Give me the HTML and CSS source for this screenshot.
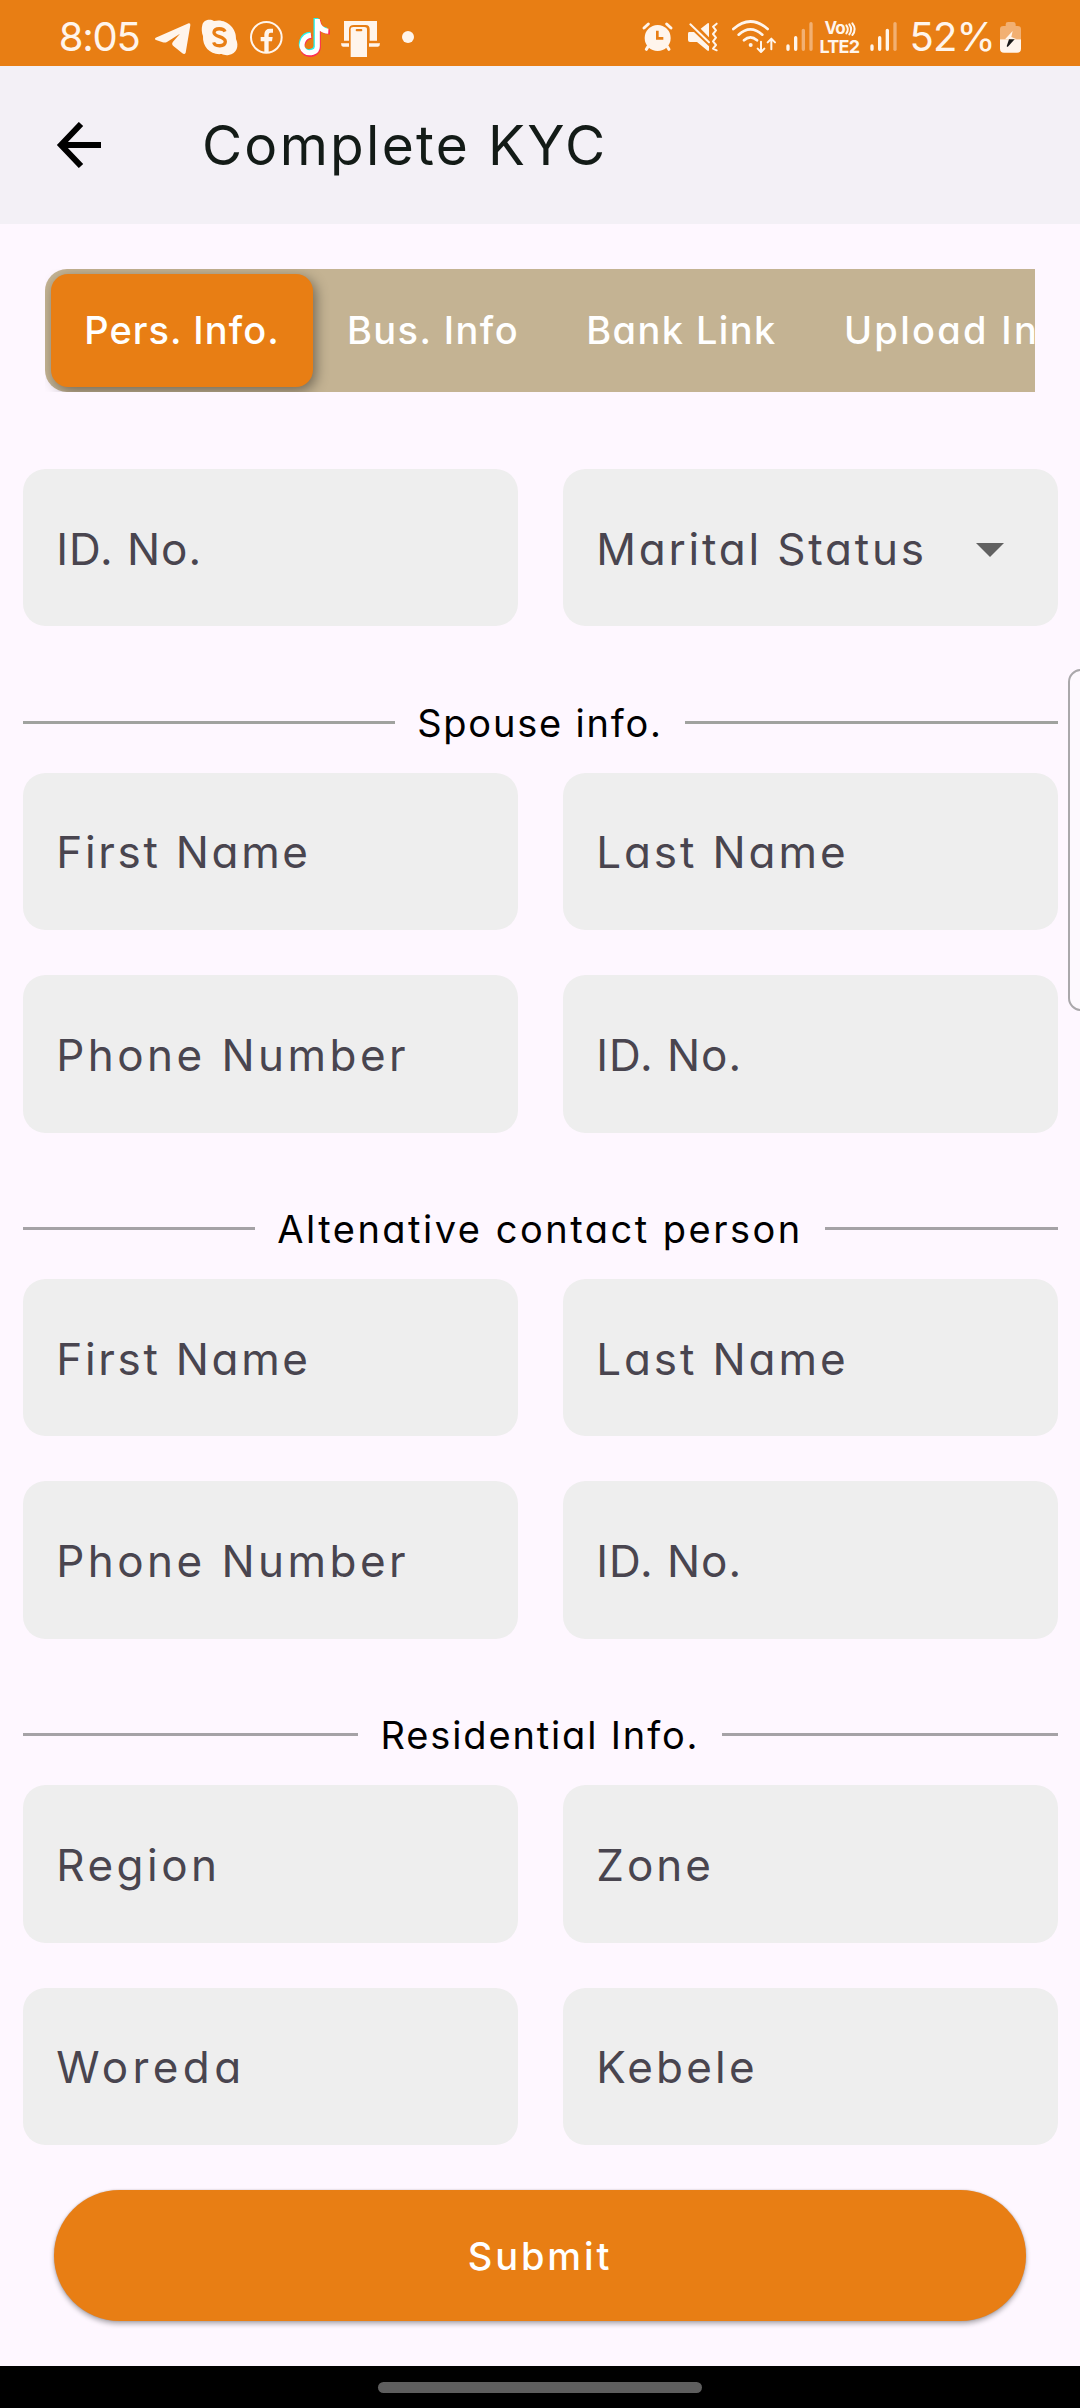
FILE: index.html
```html
<!DOCTYPE html>
<html lang="en">
<head>
<meta charset="utf-8">
<title>Complete KYC</title>
<link rel="stylesheet" href="styles.css">
</head>
<body>
<div class="screen">
  <div class="status">
    <div class="status-left">
      <span class="clock">8:05</span>
      <svg class="i-telegram" viewBox="342 48 111 126"><path d="M347 113 L446 70 Q452 69 451 76 L437 158 Q434 165 427 160 L401 139 Q393 132 399 125 L420 101 L382 125 Q376 129 368 127 L348 120 Q342 117 347 113Z"/></svg>
      <svg class="i-skype" viewBox="483 48 111 126"><path d="M487 75 C490 59 511 55 522 63 C556 54 590 82 588 117 C598 138 590 162 566 165 C558 167 550 164 545 162 C512 166 487 141 489 108 C485 98 484 86 487 75Z"/><path class="cut" d="M555 95 C551 84 524 82 522 97 C521 112 556 108 556 125 C555 141 525 141 521 127"/></svg>
      <svg class="i-facebook" viewBox="627 48 105 126"><circle class="ring" cx="679" cy="112" r="46"/><path d="M673 157 V124 H662 V111 H673 V103 Q674 86 690 86 H699 V98 H692 Q686 98 686 105 V111 H698 L696 124 H686 V157Z"/></svg>
      <svg class="i-tiktok" viewBox="765 48 108 126"><g class="note"><path class="cyan" d="M828 54 V137 C828 154 804 160 792 150 C776 136 785 103 811 103 M828 58 C831 78 843 89 860 90"/><path class="red" d="M835 60 V142 C835 160 812 168 797 160 C778 148 788 112 815 109 M835 66 C840 86 852 96 870 96"/><path class="white" d="M832 57 V140 C832 157 808 163 795 154 C778 140 787 109 813 106 M832 61 C836 82 848 93 865 94"/></g></svg>
      <svg class="i-device" viewBox="900 48 123 126"><path d="M912 63 H1011 V122 H989 V88 Q989 75 977 75 H942 Q927 75 927 88 V122 H912Z"/><path d="M903 130 H927 V140 H909 Q903 139 903 130Z M987 130 H1020 Q1020 139 1014 140 H987Z"/><path d="M932 171 V88 Q932 81 940 81 H973 Q981 81 981 88 V171Z"/><rect class="cutfill" x="947" y="87" width="20" height="7" rx="3"/></svg>
      <i class="dot"></i>
    </div>
    <div class="status-right">
      <svg class="i-alarm" viewBox="66 48 93 126"><path class="w9" d="M72 84 L85 72 M153 84 L140 72 M84 140 L79 148 M142 140 L147 148"/><circle cx="113" cy="114" r="39"/><path class="cutline" d="M112 92 V115 H130"/></svg>
      <svg class="i-mute" viewBox="201 48 93 126"><path d="M242 86 L264 69 Q267 68 267 73 V112Z M207 96 H222 L267 139 V150 Q266 155 261 151 L231 126 H210 Q204 126 204 120 V101 Q204 96 207 96Z"/><path class="w6" d="M211 73 L267 127 M290 71 L279 80 L288 91 L279 102 L288 113 L279 124 L288 135 L279 146 L290 151"/></svg>
      <svg class="i-wifi" viewBox="333 48 138 126"><path class="w8" d="M340 87 Q391 42 443 87 M356 104 Q391 72 427 104 M372 121 Q391 103 411 121"/><circle cx="392" cy="135" r="6"/><path class="w6" d="M423 125 V155 M413 146 L423 156 L433 146 M454 148 V118 M443 127 L454 116 L465 127"/></svg>
      <svg class="i-sig1" viewBox="495 48 87 126"><path class="w10" d="M504 138 V148 M527 113 V148"/><path class="w10 faint" d="M550 91 V148 M573 71 V148"/></svg>
      <span class="volte"><span class="vo">Vo<svg class="i-waves" viewBox="0 0 33 40"><path class="w6" d="M4 9 Q13 21 4 33 M13 6 Q24 21 13 36 M22 3 Q36 21 22 38"/></svg></span><span class="lte">LTE2</span></span>
      <svg class="i-sig2" viewBox="747 48 87 126"><path class="w10" d="M756 138 V148 M779 113 V148 M802 91 V148"/><path class="w10 faint" d="M825 71 V148"/></svg>
      <span class="percent">52%</span>
      <svg class="i-battery" viewBox="1137 48 69 126"><path class="faintfill" d="M1140 118 V88 Q1140 78 1150 78 H1157 V73 Q1157 66 1164 66 H1180 Q1187 66 1187 73 V78 H1193 Q1203 78 1203 88 V118Z"/><path d="M1140 118 H1203 V146 Q1203 158 1191 158 H1152 Q1140 158 1140 146Z"/><path d="M1178 93 L1155 118 H1190 L1174 111Z"/><path class="bolt" d="M1167 118 H1184 L1163 141 L1160 139Z"/></svg>
    </div>
  </div>

  <header class="appbar">
    <svg class="back" viewBox="0 0 46 46"><path d="M25 2 L5 23 L25 44 M5 23 H45"/></svg>
    <h1>Complete KYC</h1>
  </header>

  <main>
    <nav class="tabs">
      <div class="track">
        <span class="tab active t-pers">Pers. Info.</span>
        <span class="tab t-bus">Bus. Info</span>
        <span class="tab t-bank">Bank Link</span>
        <span class="tab t-upload">Upload Info</span>
      </div>
    </nav>

    <div class="grid first">
      <div class="field t-id">ID. No.</div>
      <div class="field t-marital">Marital Status<i class="caret"></i></div>
    </div>

    <div class="divider green"><span class="t-spouse">Spouse info.</span></div>
    <div class="grid">
      <div class="field t-first">First Name</div>
      <div class="field t-last">Last Name</div>
      <div class="field t-phone">Phone Number</div>
      <div class="field t-id">ID. No.</div>
    </div>

    <div class="divider"><span class="t-alt">Altenative contact person</span></div>
    <div class="grid">
      <div class="field t-first">First Name</div>
      <div class="field t-last">Last Name</div>
      <div class="field t-phone">Phone Number</div>
      <div class="field t-id">ID. No.</div>
    </div>

    <div class="divider"><span class="t-res">Residential Info.</span></div>
    <div class="grid">
      <div class="field t-region">Region</div>
      <div class="field t-zone">Zone</div>
      <div class="field t-woreda">Woreda</div>
      <div class="field t-kebele">Kebele</div>
    </div>

    <button class="submit" type="button">Submit</button>
  </main>

  <footer class="navbar"><i></i></footer>
  <div class="edge-handle"></div>
</div>
</body>
</html>
```

FILE: styles.css
```css
* { box-sizing: border-box; }
body { margin: 0; }
.screen {
  position: relative;
  display: flex;
  flex-direction: column;
  width: 1080px;
  height: 2408px;
  overflow: hidden;
  background: #fef7ff;
  font-family: Inter, "Noto Sans", sans-serif;
  font-feature-settings: "cv11";
}
svg { display: block; flex: none; }

/* status bar */
.status {
  display: flex;
  justify-content: space-between;
  height: 66px;
  padding: 16px 58.5px 0 58.7px;
  background: #e87e14;
  color: #fff5ec;
  white-space: nowrap;
}
.status svg { height: 42px; fill: #fff5ec; overflow: visible; }
.status-left, .status-right { display: flex; align-items: center; height: 42px; }
.clock { width: 95.3px; font-size: 40px; line-height: 42px; letter-spacing: -1.2px; }
.i-telegram { width: 37px; }
.i-skype { width: 37px; margin-left: 10px; }
.i-facebook { width: 35px; margin-left: 11px; }
.i-tiktok { width: 36px; margin-left: 11px; }
.i-device { width: 41px; margin-left: 9px; }
.dot { width: 12px; height: 12px; margin-left: 21px; border-radius: 50%; background: #fff5ec; }
.cut { fill: none; stroke: #e87e14; stroke-width: 10; }
.cutfill { fill: #e87e14; }
.cutline { fill: none; stroke: #e87e14; stroke-width: 8; }
.ring { fill: none; stroke: #fff5ec; stroke-width: 6; }
.note path { fill: none; stroke-width: 15; }
.note .cyan { stroke: #25f4ee; }
.note .red { stroke: #fe2c55; }
.note .white { stroke: #fff; }
.w6, .w8, .w9, .w10 { fill: none; stroke: #fff5ec; stroke-linecap: round; stroke-linejoin: round; }
.w6 { stroke-width: 6; }
.w8 { stroke-width: 8; }
.w9 { stroke-width: 9; }
.w10 { stroke-width: 10; }
.faint { stroke: #f2b072; }
.status .faintfill { fill: #f2b072; }
.status .bolt { fill: #1a1a1a; }
.i-alarm { width: 31px; }
.i-mute { width: 31px; margin-left: 14px; }
.i-wifi { width: 46px; margin-left: 13px; }
.i-sig1 { width: 29px; margin-left: 8px; }
.volte { display: flex; flex-direction: column; width: 42px; height: 42px; margin-left: 6px; padding-top: 4px; font-weight: 700; }
.vo { display: flex; height: 17px; padding-left: 5px; font-size: 17px; line-height: 17px; letter-spacing: -.8px; }
.status .i-waves { width: 11px; height: 14px; margin-top: 2px; }
.lte { font-size: 18px; line-height: 19px; letter-spacing: -.74px; }
.i-sig2 { width: 29px; margin-left: 7px; }
.percent { width: 89px; margin-left: 12px; font-size: 40px; line-height: 42px; letter-spacing: -.8px; }
.i-battery { width: 23px; }

/* app bar */
.appbar {
  display: flex;
  align-items: center;
  height: 157.5px;
  padding-left: 56px;
  background: #f3f0f6;
}
.back { width: 46px; height: 46px; fill: none; stroke: #000; stroke-width: 6; }
h1 { margin: 0 0 0 99.9px; color: #131b17; font-size: 55px; font-weight: 400; letter-spacing: 2.3px; }

/* content */
main { display: flex; flex: 1; flex-direction: column; padding: 45px 22.5px 0; }
.tabs { height: 123.75px; margin: 0 22.5px; overflow: hidden; }
.track {
  display: flex;
  width: 1300px;
  height: 123.75px;
  padding: 5.6px;
  border-radius: 22px;
  background: #c4b393;
}
.tab {
  padding: 1px 33.6px 0;
  border-radius: 17px;
  color: #fff;
  font-size: 38px;
  font-weight: 500;
  line-height: 111.5px;
  white-space: nowrap;
}
.active { background: #e87e14; box-shadow: 3px 4px 13px rgba(0, 0, 0, .42); }

.grid { display: grid; grid-template-columns: 1fr 1fr; gap: 45px; }
.grid.first { margin-top: 76.5px; }
.field {
  display: flex;
  align-items: center;
  justify-content: space-between;
  height: 157.5px;
  padding: 2px 53.5px 0 33.75px;
  border-radius: 22.5px;
  background: #eee;
  color: #49454f;
  font-size: 44px;
  white-space: nowrap;
}
.caret { border: 14px solid transparent; border-top-color: #616161; border-bottom: 0; margin-top: 2px; }

.divider {
  display: flex;
  align-items: center;
  gap: 22.5px;
  height: 90px;
  margin: 51px 0 5.25px;
  color: #000;
  font-size: 38px;
  white-space: nowrap;
}
.divider::before, .divider::after { content: ""; flex: 1; height: 3px; background: #a5a2a6; }
.divider.green::before, .divider.green::after { background: #a0a29f; }
.divider span { padding-top: 1px; }

.submit {
  height: 131px;
  margin: 44.5px 31.5px 0;
  padding: 1px 0 0;
  border: 0;
  border-radius: 66px;
  background: #e87e14;
  box-shadow: 0 3px 5px rgba(0, 0, 0, .3), 0 0 2px rgba(0, 0, 0, .2);
  color: #fff;
  font: 500 38px Inter, sans-serif;
  letter-spacing: 2.9px;
}

/* system navigation */
.navbar { display: flex; justify-content: center; height: 42px; padding-top: 16px; background: #000; }
.navbar i { width: 324px; height: 11px; border-radius: 6px; background: #5e5e5e; }
.edge-handle {
  position: absolute;
  top: 669px;
  right: -15px;
  width: 27px;
  height: 342px;
  border: 2.5px solid #aaa8ab;
  border-radius: 13px;
  background: #fdf9fe;
}

/* tracking per label */
.t-pers { letter-spacing: 1.05px; }
.t-bus { letter-spacing: 1.45px; }
.t-bank { letter-spacing: 1.4px; }
.t-upload { letter-spacing: 2.3px; }
.t-id { letter-spacing: 1px; }
.t-marital { letter-spacing: 2.8px; }
.t-first { letter-spacing: 2.7px; }
.t-last { letter-spacing: 2.9px; }
.t-phone { letter-spacing: 3.45px; }
.t-region { letter-spacing: 3.5px; }
.t-zone { letter-spacing: 3px; }
.t-woreda { letter-spacing: 4.4px; }
.t-kebele { letter-spacing: 3.2px; }
.t-spouse { letter-spacing: 1.8px; }
.t-alt { letter-spacing: 2.5px; }
.t-res { letter-spacing: 1.85px; }
```
